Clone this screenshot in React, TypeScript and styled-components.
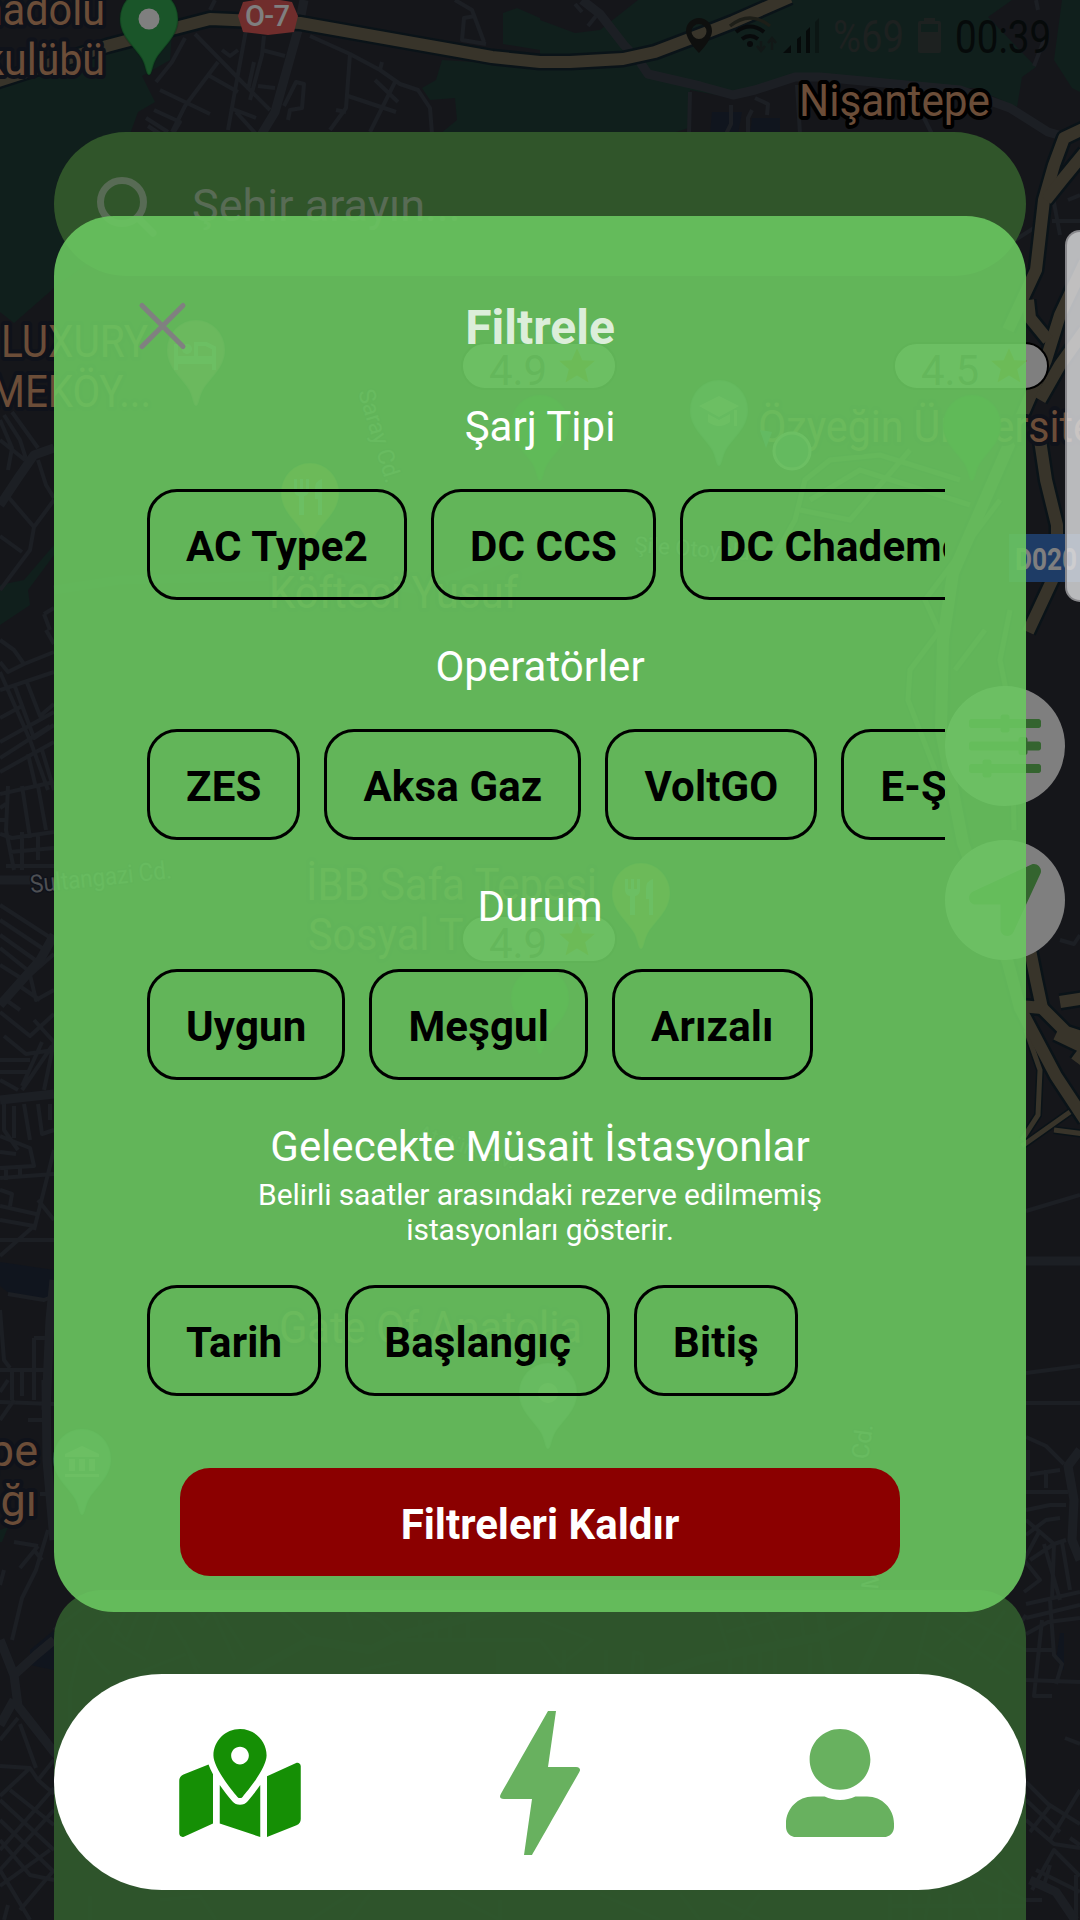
import React from "react";
import styled, { createGlobalStyle } from "styled-components";
import { FaLocationArrow, FaMapMarkedAlt, FaSlidersH, FaUserAlt } from "react-icons/fa";
import { MdBolt } from "react-icons/md";

const FONT = 'Roboto, "Noto Sans", sans-serif';

const GlobalStyle = createGlobalStyle`
  *, *::before, *::after { box-sizing: border-box; }
  body { margin: 0; background: #15161b; font-family: ${FONT}; }
`;

/* ---------- layers ---------- */

const Screen = styled.main`
  display: grid;
  grid-template: 1920px / 1080px;
  width: 1080px;
  height: 1920px;
  overflow: hidden;
`;

const Layer = styled.div`
  grid-area: 1 / 1;
  min-width: 0;
  min-height: 0;
  overflow: hidden;
  isolation: isolate;
`;

const MapCanvas = styled.svg`
  grid-area: 1 / 1;
  display: block;
`;

const Backdrop = styled(Layer)`
  background: rgba(0, 0, 0, 0.5);
`;

/* ---------- home screen under the dialog ---------- */

const HomeLayer = styled(Layer)`
  display: flex;
  flex-direction: column;
`;

const StatusBar = styled.header`
  display: flex;
  justify-content: flex-end;
  height: 132px;
  padding: 12px 27px 0 0;
`;

const StatusIcons = styled.svg`
  display: block;
  width: 136px;
  height: 48px;
  margin-right: 12px;
`;

const StatusText = styled.span<{ $width: number; $scale: number; $size: number; $tone: string }>`
  width: ${(p) => p.$width}px;
  height: 48px;
  line-height: 50px;
  font-size: ${(p) => p.$size}px;
  color: ${(p) => p.$tone};
  white-space: nowrap;
  transform: scaleX(${(p) => p.$scale});
  transform-origin: left center;
`;

const Battery = styled.svg`
  width: 26px;
  height: 48px;
  margin-right: 12px;
`;

const SearchBar = styled.div`
  display: flex;
  align-items: center;
  flex: none;
  gap: 33px;
  height: 144px;
  margin: 0 54px;
  padding: 3px 0 0 41px;
  border-radius: 72px;
  background: #60aa54;
  color: #b0d6aa;
  font-size: 45px;
`;

const SearchGlyph = styled.svg`
  width: 64px;
  height: 64px;
`;

const MapActions = styled.div`
  display: flex;
  flex-direction: column;
  align-items: flex-end;
  gap: 34px;
  margin-top: 410px;
  padding-right: 15px;
`;

const RoundButton = styled.button`
  display: grid;
  place-items: center;
  width: 120px;
  height: 120px;
  padding: 0;
  border: 0;
  border-radius: 50%;
  background: #fff;
  color: #69c85f;
  font-size: 72px;
`;

const StationSheet = styled.section`
  flex: 1;
  margin: 630px 54px 0;
  border-radius: 48px 48px 0 0;
  background: rgba(98, 182, 90, 0.9);
`;

/* ---------- dialog ---------- */

const DialogLayer = styled(Layer)`
  padding: 216px 54px 0;
`;

const Dialog = styled.section`
  display: flex;
  flex-direction: column;
  height: 1396px;
  padding: 82px 81px 36px;
  border-radius: 60px;
  background: rgba(106, 199, 96, 0.9);
`;

const DialogHeader = styled.header`
  display: grid;
  grid-template-columns: 54px 1fr 54px;
  align-items: center;
  height: 56px;
  margin-bottom: 48px;
`;

const CloseButton = styled.button`
  display: block;
  height: 54px;
  width: 54px;
  padding: 0;
  border: 0;
  background: none;
  color: #808080;
`;

const DialogTitle = styled.h1`
  margin: 0;
  padding-top: 2px;
  text-align: center;
  font-size: 48px;
  line-height: 56px;
  font-weight: 700;
  color: rgba(255, 255, 255, 0.8);
`;

const FilterGroup = styled.section`
  margin-bottom: 42px;
`;

const GroupTitle = styled.h2`
  margin: 0;
  text-align: center;
  color: #fff;
  font-size: 42px;
  line-height: 49px;
  font-weight: 400;
`;

const GroupNote = styled.p`
  width: 600px;
  margin: 6px auto 0;
  text-align: center;
  color: #fff;
  font-size: 30px;
  line-height: 35px;
  letter-spacing: -0.1px;
`;

const ChipRow = styled.div`
  display: flex;
  gap: 24px;
  margin-top: 38px;
  padding-left: 12px;
  overflow: hidden;
`;

const Chip = styled.button`
  flex: none;
  height: 111px;
  padding: 4px 36px 0;
  border: 3px solid #000;
  border-radius: 30px;
  background: none;
  color: #000;
  font: 700 42px/49px ${FONT};
  letter-spacing: 0.16px;
  white-space: nowrap;
`;

const ClearButton = styled.button`
  width: 720px;
  height: 108px;
  margin: 30px auto 0;
  padding: 4px 0 0;
  border: 0;
  border-radius: 30px;
  background: #8b0000;
  color: #fff;
  font: 700 42px/49px ${FONT};
`;

/* ---------- navigation and edge handle ---------- */

const NavLayer = styled(Layer)`
  display: flex;
  flex-direction: column;
  justify-content: flex-end;
  padding: 0 54px 30px;
`;

const NavBar = styled.nav`
  display: grid;
  grid-template-columns: repeat(3, 300px);
  justify-content: center;
  height: 216px;
  border-radius: 108px;
  background: #fff;
`;

const NavItem = styled.button<{ $active?: boolean; $width: number; $height: number }>`
  display: grid;
  place-items: center;
  padding: 2px 0 0;
  border: 0;
  background: none;
  color: ${(p) => (p.$active ? "#158f05" : "#68b15f")};

  svg {
    width: ${(p) => p.$width}px;
    height: ${(p) => p.$height}px;
  }
`;

const EdgeLayer = styled(Layer)`
  display: flex;
  justify-content: flex-end;
  padding-top: 230px;
`;

const EdgeHandle = styled.div`
  width: 15px;
  height: 372px;
  border: 2px solid rgba(125, 125, 128, 0.8);
  border-right: 0;
  border-radius: 16px 0 0 16px;
  background: rgba(222, 222, 224, 0.82);
`;

/* ---------- map drawing ---------- */

const GREENS = [
  "M0 84L100 50L172 32L170 60L142 76L155 102L138 112L130 134L120 240L54 288L14 323L0 312Z",
  "M540 20L575 33L600 30L638 0H1012L988 17L1036 67L1022 77L1017 107L974 88L919 88L819 75L795 77L733 98L690 90L688 128L670 134H446L440 134L457 120L455 98L430 100L422 88L436 80L442 60L540 66Z",
  "M503 13L517 8L540 18V50L503 44Z",
  "M1062 0L1054 60L1072 88L1080 92V0Z",
  "M0 585L24 580L54 545V555L28 590L30 605L0 625Z",
  "M0 1530L8 1527L2 1542L0 1542Z",
];

const WATERS = [
  "M712 112H742L738 134H710Z",
  "M752 118H780V134H750Z",
  "M0 1262L54 1270V1300L10 1294L0 1286Z",
  "M30 1650L54 1630V1670L30 1665Z",
  "M1060 1633H1064V1670L1056 1660Z",
];

const HIGHWAYS = [
  "M-5 82L107 46L179 27L210 19L300 23L492 57L540 62L570 62L623 59L655 52L705 33L733 22L790 -3",
  "M1085 128L1064 138L1054 165L1044 200L1036 270L1008 330",
  "M1085 152L1062 180L1046 200",
  "M1085 262L1060 315L1046 360L1020 420L1008 447L953 573L943 640L941 730L963 843L1008 963L1020 1008L1056 1076L1085 1120",
  "M1085 330L1060 365L1040 400M1028 300L1030 318L1048 340",
  "M1040 440L1046 480L1057 525V570L1028 632",
  "M1030 950L1036 980L1042 1008L1020 1006M1060 1002L1085 998",
  "M1042 1008L1066 1032L1085 1038M1056 1034L1085 1048M1085 1050L1076 1062",
];

const RAMPS = [
  "M775 555L795 520L805 480L830 460L880 455L960 480",
  "M800 510L850 520L910 450M810 500L860 470L970 505M943 640L925 600L1000 500",
  "M940 630L910 670L908 700L935 770M985 630L955 670M1010 610L1000 660L1012 720L1014 830",
  "M1026 1030L1040 1070L1038 1115L1022 1140M1022 1146L1070 1112M1054 1130L1085 1134",
];

const MAIN_STREETS = [
  "M304 0L298 30L275 112L258 140",
  "M582 0L600 14L624 45L640 62L648 74L700 86L733 95L755 90L795 77L820 77L960 90L1010 108L1048 132L1062 136",
  "M0 505L18 478L34 455L54 448",
  "M0 880H30M54 935L40 960L0 1005M0 1100L54 1094M46 1410L50 1320L54 1280",
  "M46 1380L47 1460L54 1540M0 1640L14 1675L36 1655L54 1640M14 1675L18 1706L54 1752L90 1790",
  "M0 1725L14 1700M1026 1261H1080M54 590L120 580L330 575L420 590L540 545L600 545",
  "M1080 1450L1068 1466L1074 1500L1072 1540L1080 1560M1030 1880L1056 1892L1075 1920",
  "M220 1690L310 1640L370 1650L400 1635L540 1600M640 1680L700 1660L830 1635L880 1610M820 1612L830 1680M890 1612L858 1680",
];

const STREETS = [
  "M195 34L240 80L270 110M185 38L172 62L156 82M222 50L230 56L238 50M218 62L185 106L172 132M208 75L238 92M246 30L236 85L228 130M264 36L262 55L250 100M262 50L285 56M254 62L248 90M258 86L275 88M160 90L210 114M154 110L180 122L174 132M230 108L256 118M146 118L168 132M148 126L160 134M236 112L256 134",
  "M284 106L296 82L304 84L302 108L290 110L288 120M350 54L346 108L330 130M348 96L396 112M395 82L370 132M375 80L398 102M310 36L350 54L380 70L400 84L418 90L430 108L432 134M336 110L346 112M380 70L382 62",
  "M215 0L210 10M455 0L472 10L484 42M475 16L464 18L462 40L486 44M575 4L582 12M596 16L588 26M690 92L689 134M731 105V124L726 134M748 134V118L752 110M755 98L768 104L767 115M797 85L800 134M920 110L932 134M1036 0L1038 10M1034 66L1044 40",
  "M1068 200L1080 195M1052 192L1060 235M1052 221H1080M1015 240L1034 228",
  "M4 415L20 440L28 465M0 420L12 448L8 470M0 440L25 460M12 412L38 448M38 460L46 485L54 498M4 492L34 527L54 500M0 536L22 552M34 527L30 550L0 590M44 614L54 608M44 614L50 630",
  "M0 640L14 650L24 664L54 652M0 662L8 672L24 664M0 690L54 672M0 672L30 740L48 790M14 684L34 738L54 725M26 680L40 716L54 704M0 718L22 706M0 742L54 712M46 630L54 644M0 772L54 742M0 758L50 726M28 754L36 788M42 750L54 790M0 794L54 782M8 786L6 830L14 870M22 786L30 838M38 786L46 830M0 808L6 804M0 820L8 820M0 834L12 838L54 832M10 852L54 848M22 832V870M38 834V860M6 866H54",
  "M0 905L54 940M0 920L48 952M0 935L38 962M0 948L30 972M0 965L24 980M54 954L30 975L36 1000L54 990M18 985L40 1000M6 1000L20 1010M0 1012L30 1036L54 1014M4 1036L26 1054L54 1050M0 1060H30M0 1072H28M34 1020L54 1042L44 1090M52 1046L22 1090M42 1042L22 1086M0 1080L18 1090",
  "M4 1104V1130L18 1150M14 1106V1138M24 1104L30 1140M38 1104L42 1134L54 1130M50 1104V1120M0 1136L30 1148L34 1166L0 1168M0 1152L16 1154M6 1168V1180M20 1168V1176M0 1178L54 1174M54 1150L44 1190L34 1230M0 1190L12 1194L10 1206M0 1206L36 1214M0 1220L34 1226L0 1256M0 1240H54M38 1200L54 1220M54 1296L44 1300L8 1294M0 1310L4 1360L10 1368M34 1338H46M34 1338V1366M0 1370H46M12 1370V1400M22 1370V1396M34 1366V1400M0 1392L8 1380M0 1402L54 1404",
  "M28 1420H44M14 1400L0 1420M14 1542L38 1546M48 1530L36 1570L22 1598L12 1640M38 1546L20 1568M34 1550L42 1560M4 1570L0 1585M40 1494H54M0 1766L30 1768L38 1780L54 1760M30 1768L0 1796M20 1724L36 1768M0 1740L18 1718M38 1780L54 1794M0 1800L54 1850M0 1820L54 1872M10 1790L54 1825M54 1788L0 1850M54 1810L0 1870M50 1850L0 1886M0 1840L30 1875L54 1880M0 1870L30 1920M8 1905L4 1920M54 1870L20 1910",
  "M1026 1211L1080 1195M1026 1373L1080 1366M1026 1403H1080M1026 1437L1046 1446L1064 1464M1028 1450V1480M1026 1475L1060 1470M1046 1470V1488M1026 1492H1068M1026 1510L1050 1505H1066M1026 1520L1054 1544L1066 1540M1030 1560L1054 1544L1052 1600M1026 1535L1046 1520L1060 1518M1040 1530L1024 1560L1040 1580L1024 1592M1026 1604L1080 1592M1026 1618L1080 1605M1044 1544L1060 1600M1062 1542L1070 1590M1026 1634L1048 1622L1080 1618M1042 1620L1034 1696H1052M1050 1600L1054 1655L1062 1664L1056 1684M1026 1650H1052M1026 1680L1080 1682",
  "M1026 1782L1048 1804L1080 1824M1026 1800L1060 1832M1026 1820L1054 1844L1080 1848M1050 1806L1030 1832M1080 1790L1050 1840M1070 1838L1080 1845M1032 1890L1054 1850L1080 1876M1036 1870L1080 1892M1026 1900H1042M1050 1865L1044 1885M1076 1875V1920M1065 1738L1080 1744M1060 940L1074 944L1080 935",
  "M60 1650L76 1630L96 1660L110 1674M70 1740V1690L82 1640L110 1612M100 1610L125 1640M125 1612L112 1640L146 1660M140 1610L126 1642M160 1610L146 1650M170 1620L200 1668M184 1640L198 1676M190 1610L202 1626L212 1610L235 1660M220 1612L244 1650M280 1610L312 1640M310 1610L344 1602L352 1630M345 1608L380 1620L400 1640H540M420 1620V1640M436 1620V1640M450 1616V1640M468 1616V1640M498 1650V1674M360 1670L400 1662M120 1680L186 1654M54 1630L88 1604",
  "M540 1620L592 1640L560 1666L540 1640M564 1680V1650M606 1650V1674M632 1674L634 1652L642 1654V1676M716 1610L728 1650M740 1610L752 1640M766 1612L780 1644M800 1605L804 1640M726 1632L800 1612M730 1650V1674M745 1650V1674M760 1648V1674M775 1646V1674M810 1645V1674M930 1610L914 1674M950 1610L1026 1650M940 1626L1010 1674M920 1650L960 1674M980 1612L940 1650M1005 1610L970 1660M1026 1615L990 1670",
  "M90 1920V1896M160 1900L200 1896L216 1920M310 1920L350 1894M370 1894L350 1920M450 1894L500 1920M500 1900V1920M600 1894L660 1920M680 1894L700 1920M720 1900L760 1920M760 1894L740 1920M890 1894V1920M910 1894V1920M930 1894L925 1920M950 1894V1920M970 1892L980 1920M890 1906H1026M1000 1880V1920M960 1870L1026 1900M985 1850L1020 1890",
];

const STATION_STAR = "M0 -18L5.4 -5.8L18 -5.3L8.2 3.2L11.5 16.5L0 9.4L-11.5 16.5L-8.2 3.2L-18 -5.3L-5.4 -5.8Z";

interface PinProps {
  x: number;
  y: number;
  color: string;
  children?: React.ReactNode;
}

const Pin = ({ x, y, color, children }: PinProps) => (
  <g transform={`translate(${x} ${y})`}>
    <path
      d="M0 56C-3 56-3 47-7 40C-14 28-29 18-29 0A29 30 0 0 1 29 0C29 18 14 28 7 40C3 47 3 56 0 56Z"
      fill={color}
      stroke="rgba(0,80,30,.25)"
      strokeWidth="2"
    />
    {children}
  </g>
);

const Fork = () => (
  <path
    d="M-16 -14V-4Q-16 2-11 3V22H-6V3Q-1 2-1 -4V-14H-4V-4H-7V-14H-10V-4H-13V-14ZM12 -14Q5 -12 5 -4V6H8V22H12Z"
    fill="#fff"
  />
);

interface LabelProps {
  x: number;
  y: number;
  width?: number;
  size?: number;
  end?: boolean;
  tone?: string;
  halo?: string;
  turn?: number;
  text: string;
}

const Label = ({ x, y, width, size = 45, end, tone = "#d69a70", halo = "#1e2434", turn = 0, text }: LabelProps) => (
  <text
    transform={`translate(${x} ${y}) rotate(${turn})`}
    fontSize={size}
    fill={tone}
    stroke={halo}
    strokeWidth={size > 30 ? 8 : 3}
    strokeLinejoin="round"
    paintOrder="stroke"
    textAnchor={end ? "end" : "start"}
    textLength={width}
    lengthAdjust={width ? "spacingAndGlyphs" : undefined}
  >
    {text}
  </text>
);

const Rating = ({ x, y, value }: { x: number; y: number; value: string }) => (
  <g transform={`translate(${x} ${y})`}>
    <Pin x={78} y={82} color="#0c8c14" />
    <rect x="0" y="0" width="154" height="46" rx="23" fill="#fff" stroke="#000" strokeWidth="2" />
    <text x="27" y="42" fontSize="42" fill="#505050" textLength="58" lengthAdjust="spacing">
      {value}
    </text>
    <path d={STATION_STAR} transform="translate(115 23)" fill="#f0b010" />
  </g>
);

const CityMap = () => (
  <MapCanvas width="1080" height="1920" viewBox="0 0 1080 1920" fontFamily={FONT} fill="none">
    <rect width="1080" height="1920" fill="#2a2c35" />
    {GREENS.map((d) => <path key={d} d={d} fill="#203e38" />)}
    {WATERS.map((d) => <path key={d} d={d} fill="#202a3c" />)}
    {STREETS.map((d) => <path key={d} d={d} stroke="#383e48" strokeWidth="4" strokeLinejoin="round" />)}
    {MAIN_STREETS.map((d) => <path key={d} d={d} stroke="#393f49" strokeWidth="9" strokeLinejoin="round" />)}
    {RAMPS.map((d) => <path key={d} d={d} stroke="#142630" strokeWidth="8" />)}
    {HIGHWAYS.map((d) => <path key={d} d={d} stroke="#142630" strokeWidth="17" strokeLinejoin="round" />)}
    {RAMPS.map((d) => <path key={d} d={d} stroke="#706854" strokeWidth="5" />)}
    {HIGHWAYS.map((d) => <path key={d} d={d} stroke="#706854" strokeWidth="12" strokeLinejoin="round" />)}

    <Label x={105} y={25} end text="Anadolu" width={152} />
    <Label x={105} y={75} end text="Okulübü" width={150} />
    <Pin x={149} y={19} color="#34aa52">
      <circle r="10.5" fill="#fff" />
    </Pin>
    <path d="M243 2L268 -2L292 2L298 16L294 32L268 35L243 32L238 16Z" fill="#e05a58" />
    <text x="245" y="26" fontSize="29" fontWeight="500" fill="#fff" textLength="45">O-7</text>
    <Label x={799} y={116} width={191} halo="#000" text="Nişantepe" />

    <Label x={1} y={357} width={147} text="LUXURY" />
    <Label x={151} y={407} width={184} end text="EMEKÖY..." />
    <Pin x={196} y={350} color="#e0789a">
      <path d="M-20 -6V20M-20 12H18V20M-18 8H18V-2L10 -6H0V8" stroke="#fff" strokeWidth="4" />
      <circle cx="-9" cy="-1" r="5" fill="#fff" />
    </Pin>
    <Pin x={310} y={493} color="#ff9a30"><Fork /></Pin>
    <Label x={269} y={608} width={249} text="Köfteci Yusuf" />
    <Pin x={719} y={410} color="#7b9ebd">
      <path d="M-20 -4L0 -14L20 -4L0 7ZM-11 4V12Q0 20 11 12V4L0 10ZM15 0H18V16H15Z" fill="#fff" />
    </Pin>
    <Label x={758} y={442} width={368} text="Özyeğin Üniversitesi" />
    <Label x={634} y={552} size={22} tone="#aab0b8" turn={4} text="Şile Otoyolu" />
    <Label x={358} y={392} size={23} tone="#aab0b8" turn={73} text="Saray Cd." />
    <Label x={31} y={893} width={142} size={25} tone="#9a9ea6" turn={-6} text="Sultangazi Cd." />
    <Label x={417} y={1138} size={20} tone="#7a8088" turn={18} text="Atatürk Blv." />
    <Label x={868} y={1460} size={24} tone="#aab0b8" turn={-82} text="Cd." />
    <Label x={878} y={1590} size={24} tone="#aab0b8" turn={-85} text="M" />
    <Label x={306} y={900} width={291} text="İBB Safa Tepesi" />
    <Label x={308} y={950} width={284} text="Sosyal Tesisleri" />
    <Pin x={641} y={893} color="#ff9a30"><Fork /></Pin>
    <Label x={279} y={1343} width={303} text="Gate Of Anatolia" />
    <Pin x={548} y={1393} color="#9aa8b4"><circle r="10" fill="#fff" /></Pin>
    <Label x={38} y={1466} end text="Tepe" />
    <Label x={37} y={1516} end text="ğı" />
    <Pin x={82} y={1459} color="#78b0a8">
      <path d="M-17 -5L0 -13L17 -5V-2H-17ZM-13 0H-7V12H-13ZM-3 0H3V12H-3ZM7 0H13V12H7ZM-17 15H17V18H-17Z" fill="#fff" />
    </Pin>

    <Rating x={462} y={343} value="4.9" />
    <Rating x={894} y={343} value="4.5" />
    <Rating x={462} y={916} value="4.9" />
    <path d="M760 430L772 432L766 448Z" fill="#4a90e2" />
    <circle cx="792" cy="451" r="18" fill="#6098a8" stroke="#fff" strokeWidth="3" />
    <rect x="1009" y="534" width="71" height="48" fill="#3c78cc" />
    <text x="1015" y="570" fontSize="31" fontWeight="700" fill="#fff" textLength="62" lengthAdjust="spacingAndGlyphs">
      D020
    </text>
  </MapCanvas>
);

const Home = () => (
  <HomeLayer>
    <StatusBar>
      <StatusIcons viewBox="686 12 136 48" fill="none">
        <path d="M700 18A13 13 0 0 0 687 31C687 40 700 53 700 53C700 53 713 40 713 31A13 13 0 0 0 700 18ZM700 24A7.500 7.500 0 1 1 700 39A7.500 7.500 0 0 1 700 24Z" fill="#1c1e1c" fillRule="evenodd" />
        <path d="M731 26Q751 10 771 26" stroke="#3a3c30" strokeWidth="3.500" />
        <path d="M737 32Q751 21 765 32M743 39Q751 33 759 39" stroke="#101416" strokeWidth="4" />
        <circle cx="751" cy="44" r="3" fill="#101416" />
        <path d="M762 41V51M758 46L762 51L766 46M773 50V38M769 43L773 38L777 43" stroke="#24302e" strokeWidth="2.500" />
        <path d="M784 53L792 45V53ZM798 39L802 36V53H798ZM807 31L811 27V53H807Z" fill="#0c1414" />
        <path d="M816 22L820 18V53H816Z" fill="#182c28" />
      </StatusIcons>
      <StatusText $width={84} $scale={0.85} $size={45} $tone="#3a4240">
        %69
      </StatusText>
      <Battery viewBox="0 0 26 48">
        <path d="M1 11Q1 9 3 9H7V6H18V9H22Q24 9 24 11V39Q24 41 22 41H3Q1 41 1 39ZM4 12V20H21V12Z" fill="#3a4240" fillRule="evenodd" />
      </Battery>
      <StatusText $width={98} $scale={0.84} $size={46} $tone="#0c1414">
        00:39
      </StatusText>
    </StatusBar>
    <SearchBar>
      <SearchGlyph viewBox="0 0 64 64" fill="none" stroke="currentColor">
        <circle cx="27" cy="28" r="21.500" strokeWidth="7" />
        <path d="M43 44L58 59" strokeWidth="7" strokeLinecap="round" />
      </SearchGlyph>
      Şehir arayın...
    </SearchBar>
    <MapActions>
      <RoundButton aria-label="Filtrele"><FaSlidersH /></RoundButton>
      <RoundButton aria-label="Konum"><FaLocationArrow /></RoundButton>
    </MapActions>
    <StationSheet />
  </HomeLayer>
);

const GROUPS: { title: string; note?: string; options: string[] }[] = [
  { title: "Şarj Tipi", options: ["AC Type2", "DC CCS", "DC Chademo"] },
  { title: "Operatörler", options: ["ZES", "Aksa Gaz", "VoltGO", "E-Şarj"] },
  { title: "Durum", options: ["Uygun", "Meşgul", "Arızalı"] },
  {
    title: "Gelecekte Müsait İstasyonlar",
    note: "Belirli saatler arasındaki rezerve edilmemiş istasyonları gösterir.",
    options: ["Tarih", "Başlangıç", "Bitiş"],
  },
];

const FilterDialog = () => (
  <DialogLayer>
    <Dialog>
      <DialogHeader>
        <CloseButton aria-label="Kapat">
          <svg width="54" height="54" viewBox="0 0 54 54" stroke="currentColor" strokeWidth="5" strokeLinecap="round">
            <path d="M7 5.500L48 46.500M48 5.500L7 46.500" />
          </svg>
        </CloseButton>
        <DialogTitle>Filtrele</DialogTitle>
      </DialogHeader>
      {GROUPS.map((group) => (
        <FilterGroup key={group.title}>
          <GroupTitle>{group.title}</GroupTitle>
          {group.note && <GroupNote>{group.note}</GroupNote>}
          <ChipRow>
            {group.options.map((option) => <Chip key={option}>{option}</Chip>)}
          </ChipRow>
        </FilterGroup>
      ))}
      <ClearButton>Filtreleri Kaldır</ClearButton>
    </Dialog>
  </DialogLayer>
);

export default function App() {
  return (
    <>
      <GlobalStyle />
      <Screen>
        <CityMap />
        <Home />
        <Backdrop />
        <FilterDialog />
        <NavLayer>
          <NavBar>
            <NavItem $active $width={122} $height={108} aria-label="Harita"><FaMapMarkedAlt /></NavItem>
            <NavItem $width={192} $height={192} aria-label="Şarj"><MdBolt /></NavItem>
            <NavItem $width={108} $height={108} aria-label="Profil"><FaUserAlt /></NavItem>
          </NavBar>
        </NavLayer>
        <EdgeLayer>
          <EdgeHandle />
        </EdgeLayer>
      </Screen>
    </>
  );
}
